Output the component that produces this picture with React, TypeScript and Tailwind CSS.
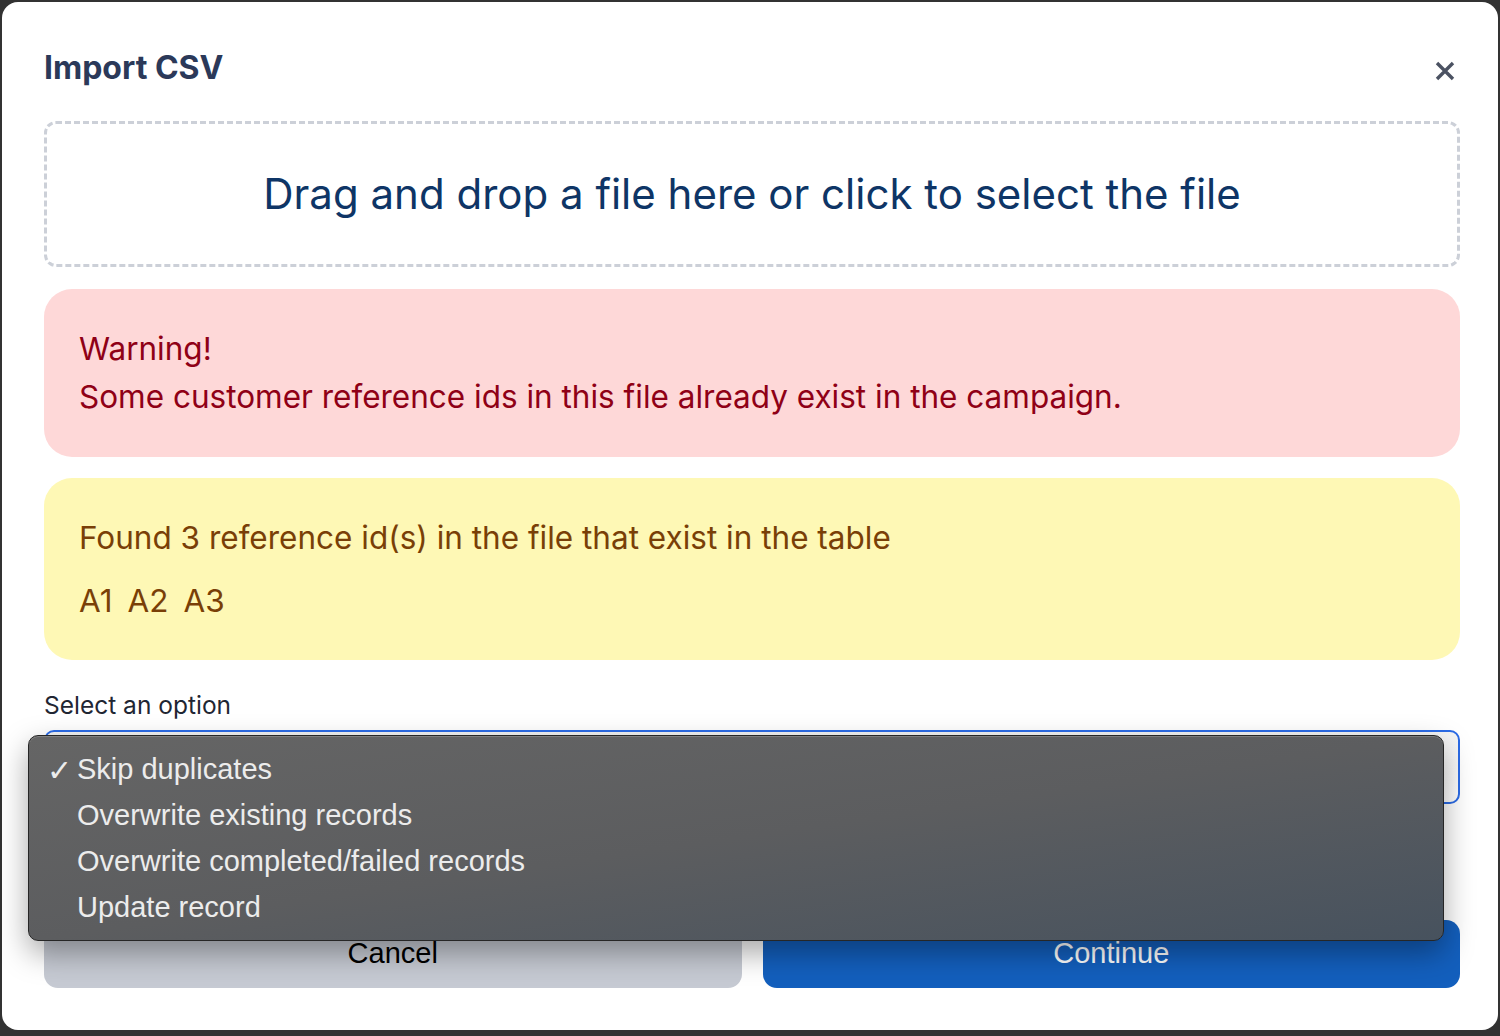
import { useState } from 'react'

const options = [
  'Skip duplicates',
  'Overwrite existing records',
  'Overwrite completed/failed records',
  'Update record',
]

const duplicateIds = ['A1', 'A2', 'A3']

function CloseIcon() {
  return (
    <svg width="22" height="22" viewBox="0 0 22 22" fill="none" stroke="#4b5262" strokeWidth="3.4" strokeLinecap="butt">
      <path d="M3 3 L19 19 M19 3 L3 19" />
    </svg>
  )
}

export default function App() {
  const [selected] = useState(0)

  return (
    <div className="h-[1036px] w-full bg-[#323232] pb-[6px] pl-[2px] pr-[2px] pt-[2px] font-['Inter',sans-serif]">
      <div className="relative flex h-full flex-col rounded-[16px] bg-white pb-[42px] pl-[42px] pr-[38px] pt-[46px]">
        {/* header */}
        <div className="flex items-center justify-between">
          <h2 className="text-[32px] font-bold leading-[40px] text-[#2b3959]">Import CSV</h2>
          <button className="mr-[3px] mt-[6px] flex h-[24px] w-[24px] items-center justify-center">
            <CloseIcon />
          </button>
        </div>

        {/* drop zone */}
        <div className="mt-[33px] flex h-[146px] items-center justify-center rounded-[12px] border-[3px] border-dashed border-[#ccd0d8]">
          <p className="text-[42px] leading-[50px] text-[#0e3566]">Drag and drop a file here or click to select the file</p>
        </div>

        {/* warning */}
        <div className="mt-[22px] rounded-[28px] bg-[#fed8d8] px-[35px] py-[36px] text-[31.5px] leading-[48px] text-[#8f0016]">
          <p>Warning!</p>
          <p>Some customer reference ids in this file already exist in the campaign.</p>
        </div>

        {/* duplicates */}
        <div className="mt-[21px] rounded-[28px] bg-[#fef8b5] px-[35px] pb-[37px] pt-[38px] text-[31.5px] leading-[44px] text-[#793f07]">
          <p>Found 3 reference id(s) in the file that exist in the table</p>
          <div className="mt-[19px] flex gap-[15px]">
            {duplicateIds.map((id) => (
              <span key={id}>{id}</span>
            ))}
          </div>
        </div>

        {/* select */}
        <label className="mt-[30px] text-[24.5px] leading-[30px] text-[#1f2633]">Select an option</label>
        <div className="mt-[10px] h-[74px] rounded-[10px] border-2 border-[#2b6be6] bg-gradient-to-b from-[#f4f4f4] to-white" />

        {/* actions */}
        <div className="mt-[116px] flex gap-[21px] font-['Liberation_Sans',Arial,sans-serif]">
          <button className="h-[68px] flex-1 rounded-[14px] bg-[#c6cad3] text-[29px] text-black">Cancel</button>
          <button className="h-[68px] flex-1 rounded-[14px] bg-[#135fbd] text-[29px] text-white">Continue</button>
        </div>

        {/* open native dropdown */}
        <div className="absolute left-[26px] top-[733px] w-[1416px] rounded-[10px] border border-[#262626] bg-gradient-to-br from-[#656565] via-[#5c5d5f] to-[#47525e] pb-[9px] pt-[11px] font-['Liberation_Sans',Arial,sans-serif] shadow-[0_12px_30px_rgba(0,0,0,0.35),inset_0_1px_0_rgba(255,255,255,0.18)]">
          {options.map((opt, i) => (
            <div key={opt} className="flex h-[46px] items-center text-[29px] text-[#ececec]">
              <span className="w-[48px] pl-[18px] text-[30px]">{i === selected ? '✓' : ''}</span>
              <span>{opt}</span>
            </div>
          ))}
        </div>
      </div>
    </div>
  )
}
